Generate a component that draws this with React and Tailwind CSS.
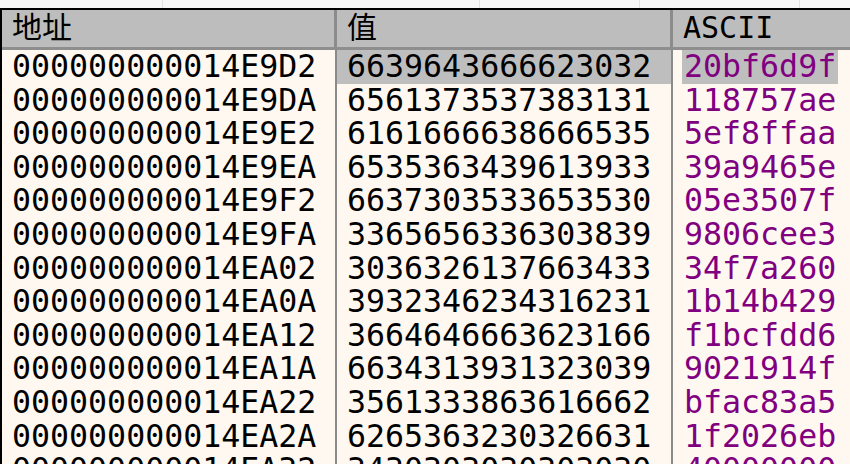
import React from "react";

const rows = [
  ["000000000014E9D2", "6639643666623032", "20bf6d9f"],
  ["000000000014E9DA", "6561373537383131", "118757ae"],
  ["000000000014E9E2", "6161666638666535", "5ef8ffaa"],
  ["000000000014E9EA", "6535363439613933", "39a9465e"],
  ["000000000014E9F2", "6637303533653530", "05e3507f"],
  ["000000000014E9FA", "3365656336303839", "9806cee3"],
  ["000000000014EA02", "3036326137663433", "34f7a260"],
  ["000000000014EA0A", "3932346234316231", "1b14b429"],
  ["000000000014EA12", "3664646663623166", "f1bcfdd6"],
  ["000000000014EA1A", "6634313931323039", "9021914f"],
  ["000000000014EA22", "3561333863616662", "bfac83a5"],
  ["000000000014EA2A", "6265363230326631", "1f2026eb"],
  ["000000000014EA32", "3430303030303030", "40000000"],
];

const mono = { fontFamily: '"DejaVu Sans Mono", "Noto Sans CJK SC", monospace' };

export default function App() {
  return (
    <div className="w-[850px] h-[464px] overflow-hidden bg-[#fff8f1] relative" style={mono}>
      <div className="h-[8px] bg-[#f7f7f7] flex">
        <div className="w-[163px] border-r border-[#e2e2e2]" />
        <div className="w-[317px] border-r border-[#e2e2e2]" />
        <div className="w-[160px] border-r border-[#e2e2e2]" />
        <div className="w-[160px] border-r border-[#e2e2e2]" />
      </div>
      <div className="h-[2px] bg-black" />
      <div className="flex border-l-2 border-black h-[454px] overflow-hidden">
        <Column width="w-[335px]" header="地址" sep>
          {rows.map((r, i) => (
            <Cell key={i}>{r[0]}</Cell>
          ))}
        </Column>
        <Column width="w-[336px]" header="值" sep>
          {rows.map((r, i) => (
            <Cell key={i} selected={i === 0}>{r[1]}</Cell>
          ))}
        </Column>
        <Column width="flex-1" header="ASCII">
          {rows.map((r, i) => (
            <div key={i} className="h-[33.6px] shrink-0 pl-[9px] flex items-center text-[31.6px] leading-none text-[#800080]">
              <span className={i === 0 ? "bg-[#bebebe] h-[34px] flex items-center pl-[2px] pr-[2px]" : "pl-[2px]"}>{r[2]}</span>
            </div>
          ))}
        </Column>
      </div>
    </div>
  );
}

function Column({ width, header, sep, children }) {
  return (
    <div className={`${width} flex flex-col min-h-0`}>
      <div className={`h-[40px] shrink-0 bg-[#bdbdbd] border-b-[3px] border-[#8e8e8e] flex items-center pl-[10px] text-[30px] leading-none text-black ${sep ? "border-r-[3px] border-r-[#8c8c8c]" : ""}`}>
        <span className="-mt-[2px]">{header}</span>
      </div>
      <div className={`flex-1 flex flex-col pt-[0px] overflow-hidden ${sep ? "border-r-2 border-[#8a8a8a]" : ""}`}>{children}</div>
    </div>
  );
}

function Cell({ children, selected }) {
  return (
    <div className={`h-[33.6px] shrink-0 pl-[10px] flex items-center text-[31.6px] leading-none text-black ${selected ? "bg-[#bebebe]" : ""}`}>
      {children}
    </div>
  );
}
